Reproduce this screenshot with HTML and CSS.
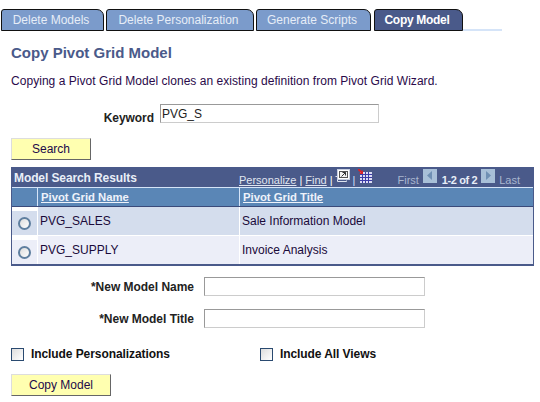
FILE: index.html
```html
<!DOCTYPE html>
<html lang="en">
<head>
<meta charset="UTF-8">
<title>Copy Pivot Grid Model</title>
<link rel="stylesheet" href="styles.css">
</head>
<body>
<div class="tabs">
  <div class="tab">Delete Models</div>
  <div class="tab tab-2">Delete Personalization</div>
  <div class="tab tab-3">Generate Scripts</div>
  <div class="tab tab-on">Copy Model</div>
  <div class="tab-rest"></div>
</div>

<div class="content">
  <h1 class="page-title">Copy Pivot Grid Model</h1>
  <p class="intro">Copying a Pivot Grid Model clones an existing definition from Pivot Grid Wizard.</p>

  <div class="keyword-row">
    <label class="keyword-label">Keyword</label>
    <div class="field keyword-field">PVG_S</div>
  </div>

  <div class="btn search-btn">Search</div>

  <div class="grid">
    <div class="grid-top">
      <span class="grid-title">Model Search Results</span>
      <div class="grid-nav">
        <a>Personalize</a><span class="sep">|</span><a>Find</a><span class="sep">|</span>
        <svg class="icon-view" width="15" height="14" viewBox="0 0 15 14">
          <path d="M0.5 7.500h2v5h9v-1" fill="none" stroke="#dfe4ef"/>
          <rect x="2.500" y="0.500" width="12" height="10" fill="#fff" stroke="#c8cfe0"/>
          <rect x="4.500" y="2.500" width="8" height="6" fill="#f4f4f4" stroke="#555"/>
          <path d="M6.500 7.500l4-4M7.500 3.500h3v3" fill="none" stroke="#333"/>
        </svg>
        <span class="sep sep-icon">|</span>
        <svg class="icon-dl" width="14" height="14" viewBox="0 0 14 14">
          <path d="M2 3h12v11H2z" fill="#dcdcf4"/>
          <path d="M2 5.500h12M2 8.500h12M2 11.500h12M4.500 3v11M7.500 3v11M10.500 3v11" stroke="#3c3ca8" stroke-width="1"/>
          <path d="M0 0l4 3.500" stroke="#d8232a" stroke-width="2"/>
          <path d="M1 5h4V1z" fill="#d8232a"/>
        </svg>
      </div>
      <div class="pager">
        <span class="pager-off first">First</span>
        <span class="arrow"><svg width="14" height="14" viewBox="0 0 14 14"><path d="M9 2v9L4 6.500z" fill="#6f90b4"/></svg></span>
        <span class="pager-count">1-2 of 2</span>
        <span class="arrow"><svg width="14" height="14" viewBox="0 0 14 14"><path d="M5 2v9l5-4.500z" fill="#6f90b4"/></svg></span>
        <span class="pager-off last">Last</span>
      </div>
    </div>
    <div class="grid-head">
      <div class="cell-radio"></div>
      <div class="head-cell"><a>Pivot Grid Name</a></div>
      <div class="head-cell"><a>Pivot Grid Title</a></div>
    </div>
    <div class="grid-row row-odd">
      <div class="cell-radio"><span class="radio"></span></div>
      <div class="cell">PVG_SALES</div>
      <div class="cell">Sale Information Model</div>
    </div>
    <div class="grid-row row-even">
      <div class="cell-radio"><span class="radio"></span></div>
      <div class="cell">PVG_SUPPLY</div>
      <div class="cell">Invoice Analysis</div>
    </div>
  </div>

  <div class="form-row">
    <label class="form-label">*New Model Name</label>
    <div class="field new-field"></div>
  </div>
  <div class="form-row form-row-2">
    <label class="form-label">*New Model Title</label>
    <div class="field new-field"></div>
  </div>

  <div class="checks">
    <div class="check check-1"><span class="box"></span>Include Personalizations</div>
    <div class="check"><span class="box"></span>Include All Views</div>
  </div>

  <div class="btn copy-btn">Copy Model</div>
</div>
</body>
</html>
```

FILE: styles.css
```css
/* Page */
body {
  margin: 0;
  background-color: #fff;
  font-family: "Liberation Sans", Arial, sans-serif;
  font-size: 12px;
  color: #000;
  overflow: hidden;
}

/* Tab strip */
.tabs {
  display: flex;
  align-items: flex-end;
  height: 31px;
  padding: 0 0 0 1px;
}
.tab {
  box-sizing: border-box;
  width: 103px;
  height: 22px;
  margin-right: 2px;
  padding-right: 3px;
  border: 1px solid #111;
  border-radius: 3px 7px 0 0;
  background-color: #7b9bcb;
  color: #e6edf7;
  font-size: 12px;
  line-height: 21px;
  text-align: center;
}
.tab-2 {
  width: 148px;
}
.tab-3 {
  width: 115px;
  margin-right: 3px;
}
.tab-on {
  width: 89px;
  margin-right: 0;
  background-color: #4a5a8a;
  color: #fff;
  font-weight: bold;
  letter-spacing: -0.3px;
}
.tab-rest {
  width: 39px;
  height: 2px;
  background-color: #d5e4f8;
}

/* Main content */
.content {
  padding-left: 11px;
}
.page-title {
  margin: 0;
  padding-top: 14px;
  font-size: 15px;
  line-height: 16px;
  font-weight: bold;
  color: #4a5a8a;
}
.intro {
  margin: 0;
  padding-top: 13px;
  line-height: 14px;
  letter-spacing: 0.04px;
  color: #2a0a4a;
}
.keyword-row {
  display: flex;
  align-items: flex-start;
  margin-top: 16px;
}
.keyword-label {
  width: 143px;
  padding-top: 7px;
  font-weight: bold;
  line-height: 14px;
  text-align: right;
  letter-spacing: -0.05px;
  color: #222;
}
.field {
  box-sizing: border-box;
  height: 19px;
  border: 1px solid #ccc;
  border-top-color: #999;
  border-left-color: #999;
  background-color: #fff;
  color: #222;
}
.keyword-field {
  width: 219px;
  margin-left: 6px;
  padding-left: 1px;
  line-height: 18px;
}

/* Yellow buttons */
.btn {
  box-sizing: border-box;
  height: 22px;
  border: 1px solid #ddd;
  border-right-color: #666;
  border-bottom-color: #666;
  background-color: #ffffb0;
  color: #220a4a;
  line-height: 20px;
  text-align: center;
}
.search-btn {
  width: 80px;
  margin-top: 13px;
}
.copy-btn {
  width: 100px;
  margin-top: 13px;
}

/* Results grid */
.grid {
  box-sizing: border-box;
  width: 523px;
  margin-top: 7px;
  border: 1px solid #4a5a8a;
  border-bottom-width: 2px;
  background-color: #fff;
}
.grid-top {
  display: flex;
  align-items: center;
  height: 19px;
  background-color: #4a5a8a;
  color: #e0e6f0;
}
.grid-title {
  width: 225px;
  padding-left: 2px;
  padding-top: 1px;
  font-weight: bold;
  letter-spacing: -0.1px;
  color: #e8eef8;
}
.grid-nav {
  display: flex;
  align-items: center;
  padding-top: 4px;
  font-size: 11px;
}
.grid-nav a {
  text-decoration: underline;
}
.sep {
  margin: 0 3px;
  color: #fff;
}
.sep-icon {
  margin: 0 3px;
  color: #cfe0ff;
}
.icon-view {
  margin: 0 0 7px -1px;
}
.icon-dl {
  margin-bottom: 7px;
}
.pager {
  display: flex;
  align-items: center;
  margin-left: 25px;
  padding-top: 4px;
  font-size: 11px;
}
.pager-off {
  color: #a9b6cf;
}
.pager-count {
  margin: 0 4px 0 5px;
  font-weight: bold;
  letter-spacing: -0.4px;
  color: #e8eef8;
}
.arrow {
  display: flex;
  width: 14px;
  height: 14px;
  margin: 0 0 7px 4px;
  background-color: #a8c0d8;
}
.pager-count + .arrow {
  margin-left: 0;
  margin-right: 4px;
}
.grid-head,
.grid-row {
  display: grid;
  grid-template-columns: 25px 202px 1fr;
}
.grid-head {
  box-sizing: border-box;
  height: 20px;
  background-color: #5a86b6;
  border-top: 1px solid #d5e4f8;
  border-bottom: 1px solid #3a4a7a;
}
.head-cell {
  border-left: 1px solid #d5e4f8;
  padding-left: 3px;
  color: #eef2fa;
  font-weight: bold;
  font-size: 11.300px;
  line-height: 18px;
}
.head-cell a {
  text-decoration: underline;
}
.grid-row {
  color: #1a0a3a;
}
.row-odd {
  height: 28px;
  background-color: #d4dded;
  border-bottom: 1px solid #fff;
}
.row-even {
  height: 28px;
  background-color: #eceef8;
}
.cell {
  padding: 7px 0 0 2px;
  border-left: 1px solid #fff;
  line-height: 14px;
}
.cell-radio {
  display: flex;
  justify-content: center;
}
.grid-row .cell-radio {
  box-sizing: border-box;
  padding-top: 6px;
  border-top: 4px solid #fff;
}
.radio {
  box-sizing: border-box;
  width: 13px;
  height: 13px;
  border: 2px solid #5f7f9f;
  border-radius: 50%;
  background: linear-gradient(135deg, #ddd, #fff);
}

/* New model form */
.form-row {
  display: flex;
  align-items: center;
  margin-top: 11px;
}
.form-row-2 {
  margin-top: 13px;
}
.form-label {
  width: 183px;
  font-weight: bold;
  text-align: right;
  letter-spacing: -0.02px;
  color: #222;
}
.new-field {
  width: 221px;
  margin-left: 10px;
}

/* Checkboxes */
.checks {
  display: flex;
  margin-top: 19px;
}
.check {
  display: flex;
  align-items: center;
  font-weight: bold;
  letter-spacing: -0.08px;
  color: #111;
}
.check-1 {
  width: 249px;
}
.box {
  box-sizing: border-box;
  width: 13px;
  height: 13px;
  margin-right: 7px;
  border: 1px solid #2a4a70;
  background: linear-gradient(135deg, #ddd, #fff);
}
```
